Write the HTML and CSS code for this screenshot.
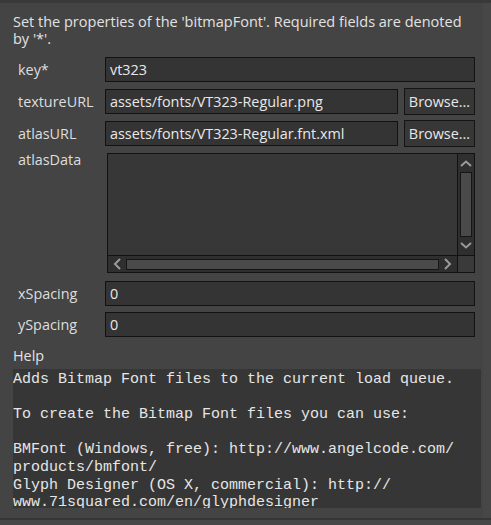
FILE: index.html
```html
<!DOCTYPE html>
<html>
<head>
<meta charset="utf-8">
<link rel="stylesheet" href="styles.css">
</head>
<body>
<div class="topbar"></div>
<div class="dialog">
  <p class="intro">Set the properties of the 'bitmapFont'. Required fields are denoted<br>by '*'.</p>
  <div class="form">
    <div class="row">
      <label class="lbl">key*</label>
      <div class="field">vt323</div>
    </div>
    <div class="row tall">
      <label class="lbl">textureURL</label>
      <div class="field">assets/fonts/VT323-Regular.png</div>
      <button class="browse">Browse...</button>
    </div>
    <div class="row tall">
      <label class="lbl">atlasURL</label>
      <div class="field">assets/fonts/VT323-Regular.fnt.xml</div>
      <button class="browse">Browse...</button>
    </div>
    <div class="row area-row">
      <label class="lbl top">atlasData</label>
      <div class="textarea">
        <div class="ta-content"></div>
        <div class="vscroll">
          <svg class="arrow" width="12" height="7" viewBox="0 0 12 7"><path d="M1 6 L6 1.5 L11 6" fill="none" stroke="#9a9a9a" stroke-width="2"/></svg>
          <div class="vthumb"></div>
          <svg class="arrow" width="12" height="7" viewBox="0 0 12 7"><path d="M1 1 L6 5.5 L11 1" fill="none" stroke="#9a9a9a" stroke-width="2"/></svg>
        </div>
        <div class="hscroll">
          <svg class="arrow" width="8" height="12" viewBox="0 0 8 12"><path d="M7 1 L2 6 L7 11" fill="none" stroke="#9a9a9a" stroke-width="2"/></svg>
          <div class="hthumb"></div>
          <svg class="arrow" width="8" height="12" viewBox="0 0 8 12"><path d="M1 1 L6 6 L1 11" fill="none" stroke="#9a9a9a" stroke-width="2"/></svg>
        </div>
        <div class="corner"></div>
      </div>
    </div>
    <div class="row">
      <label class="lbl">xSpacing</label>
      <div class="field">0</div>
    </div>
    <div class="row">
      <label class="lbl">ySpacing</label>
      <div class="field">0</div>
    </div>
  </div>
  <div class="help-label">Help</div>
  <pre class="help">Adds Bitmap Font files to the current load queue.

To create the Bitmap Font files you can use:

BMFont (Windows, free): http://www.angelcode.com/
products/bmfont/
Glyph Designer (OS X, commercial): http://
www.71squared.com/en/glyphdesigner</pre>
</div>
<div class="bottombar"></div>
</body>
</html>
```
FILE: styles.css
```css
html, body {
  margin: 0;
  padding: 0;
  background: #474747;
  height: 525px;
  overflow: hidden;
}
body {
  font-family: "Open Sans", "Noto Sans", sans-serif;
  font-size: 14.4px;
  color: #e2e2e2;
  display: flex;
  flex-direction: column;
}
.topbar {
  height: 3px;
  background: #393939;
  flex: none;
}
.dialog {
  width: 483px;
  height: 515px;
  box-sizing: border-box;
  background: #444444;
  padding: 10px 2px 0 13px;
  display: flex;
  flex-direction: column;
  flex: none;
}
.intro {
  margin: 0;
  font-size: 14.5px;
  line-height: 17px;
  white-space: nowrap;
}
.form {
  margin-top: 10px;
  width: 462px;
  display: flex;
  flex-direction: column;
  gap: 6px;
}
.row {
  display: flex;
  align-items: center;
  height: 25px;
}
.row.tall {
  height: 26px;
}
.row.area-row {
  height: 120px;
  align-items: flex-start;
  margin-top: 1px;
  margin-bottom: 2px;
}
.lbl {
  width: 87px;
  padding-left: 5px;
  flex: none;
  color: #dedede;
}
.lbl.top {
  line-height: 13px;
}
.field {
  flex: 1;
  height: 25px;
  box-sizing: border-box;
  border: 1px solid #121212;
  background: #343434;
  padding: 0 4px;
  line-height: 23px;
  color: #e8e8e8;
  white-space: nowrap;
  overflow: hidden;
}
.browse {
  flex: none;
  width: 71px;
  height: 27px;
  margin-left: 6px;
  box-sizing: border-box;
  border: 1px solid #151515;
  background: #373737;
  color: #e8e8e8;
  font-family: inherit;
  font-size: 14.4px;
  padding: 0;
}
.textarea {
  margin-left: 2px;
  flex: 1;
  height: 120px;
  box-sizing: border-box;
  border: 1px solid #121212;
  background: #373737;
  display: grid;
  grid-template-columns: 1fr 17px;
  grid-template-rows: 1fr 17px;
}
.ta-content {
  background: #373737;
}
.vscroll {
  border-left: 1px solid #121212;
  background: #2f2f2f;
  display: flex;
  flex-direction: column;
  align-items: center;
  padding: 6px 0 6px;
  gap: 5px;
}
.vthumb {
  width: 12px;
  flex: 1;
  box-sizing: border-box;
  border: 1px solid #161616;
  background: #4a4a4a;
}
.hscroll {
  border-top: 1px solid #121212;
  background: #2f2f2f;
  display: flex;
  align-items: center;
  padding: 0 5px 0 5px;
  gap: 5px;
}
.hthumb {
  flex: 1;
  height: 11px;
  box-sizing: border-box;
  border: 1px solid #161616;
  background: #4a4a4a;
}
.arrow {
  display: block;
  flex: none;
}
.corner {
  border-top: 1px solid #121212;
  border-left: 1px solid #121212;
  background: #3a3a3a;
}
.help-label {
  margin-top: 10px;
  line-height: 18px;
  color: #e2e2e2;
}
.help {
  margin: 4px 0 0 0;
  width: 468px;
  height: 139px;
  overflow: hidden;
  background: #363636;
  font-family: "Liberation Mono", "DejaVu Sans Mono", monospace;
  font-size: 15px;
  line-height: 17.7px;
  padding-top: 1.5px;
  box-sizing: border-box;
  color: #e6e6e6;
  white-space: pre;
}
.bottombar {
  flex: none;
  height: 2px;
  background: #363636;
}
```
